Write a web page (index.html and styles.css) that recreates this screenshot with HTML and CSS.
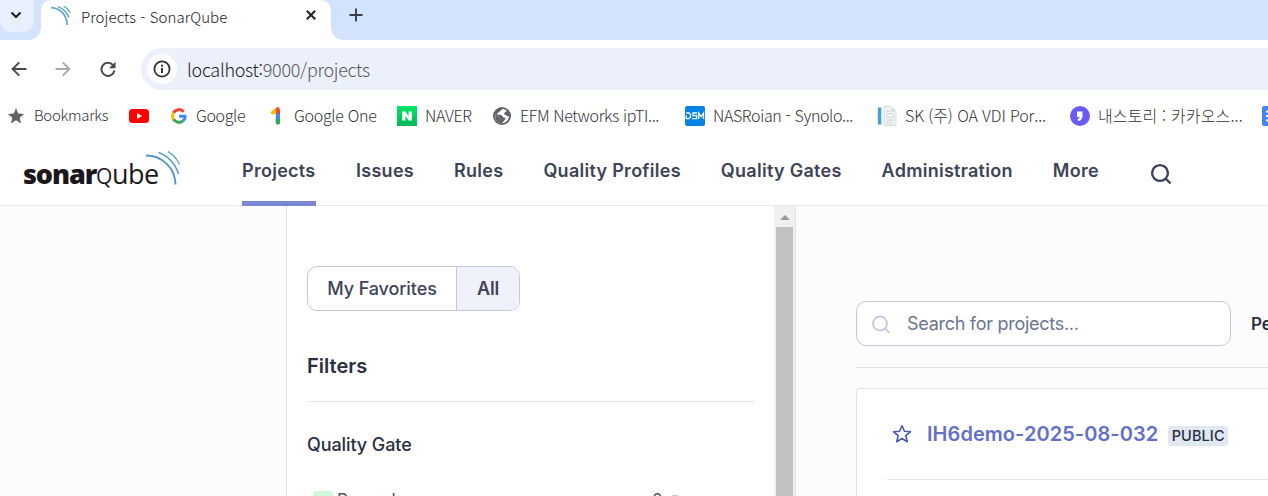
FILE: index.html
```html
<!DOCTYPE html>
<html lang="ko">
<head>
<meta charset="utf-8">
<title>Projects - SonarQube</title>
<link rel="stylesheet" href="styles.css">
</head>
<body>
<div class="window">
  <div class="tabstrip">
    <div class="tab-search"><svg width="12" height="8" viewBox="0 0 12 8"><path d="M1.500 1.500 6 6l4.500-4.500" fill="none" stroke="#202124" stroke-width="2.200"/></svg></div>
    <div class="tab">
      <svg class="favicon" width="20" height="20" viewBox="0 0 20 20" fill="none" stroke="#5fa3d0"><path d="M0 1.600C9 1.800 16 9 16.200 19" stroke-width="1.700"/><path d="M7 .6c5 2 9 6 11 11" stroke-width="1.400"/><path d="M12.500 0c3 1.500 5.500 4 7 7" stroke-width="1.200"/></svg>
      <span class="tab-title">Projects - SonarQube</span>
      <svg class="tab-close" width="10" height="10" viewBox="0 0 10 10"><path d="m.8.8 8.400 8.400m0-8.400L.8 9.200" stroke="#202124" stroke-width="2"/></svg>
    </div>
    <svg class="new-tab" width="14" height="14" viewBox="0 0 14 14"><path d="M7 .5v13M.5 7h13" stroke="#3b3e42" stroke-width="1.900"/></svg>
  </div>
  <div class="toolbar">
    <svg class="tool" width="16" height="16" viewBox="0 0 16 16" fill="none" stroke="#47494d" stroke-width="1.900"><path d="M15.500 8H2M8.300 1.300 1.600 8l6.700 6.700"/></svg>
    <svg class="tool" width="16" height="16" viewBox="0 0 16 16" fill="none" stroke="#a8a9ab" stroke-width="1.900"><path d="M.5 8H14M7.700 1.300 14.400 8l-6.700 6.700"/></svg>
    <svg class="tool" width="16" height="16" viewBox="0 0 16 16"><path d="M13 4.200A6.500 6.500 0 1 0 14.400 9.500" fill="none" stroke="#47494d" stroke-width="2"/><path d="M15.500.7v6.500H9z" fill="#47494d"/></svg>
    <div class="omnibox">
      <div class="site-info"><svg width="18" height="18" viewBox="0 0 18 18"><circle cx="9" cy="9" r="7.600" fill="none" stroke="#303236" stroke-width="1.800"/><path d="M9 8v5M9 4.800v2" stroke="#303236" stroke-width="1.900"/></svg></div>
      <span class="url"><span class="host">localhost:</span>9000/projects</span>
    </div>
  </div>
  <div class="bookmarks">
    <div class="bm bm-star"><svg width="20" height="20" viewBox="0 0 20 20"><path d="m10 2 2.200 5.500 6 .4-4.600 3.800 1.500 5.800L10 14.300l-5.100 3.200 1.500-5.800L1.800 7.900l6-.4z" fill="#5f6368"/></svg><span>Bookmarks</span></div>
    <div class="bm bm-yt"><svg width="20" height="20" viewBox="0 0 20 20"><rect y="3" width="20" height="14" rx="3.500" fill="#f00"/><path d="m8 7 5 3-5 3z" fill="#fff"/></svg></div>
    <div class="bm bm-google"><svg width="20" height="20" viewBox="0 0 20 20" fill="none" stroke-width="3"><path d="M15.700 5.700A6.400 6.400 0 0 0 5.500 6.700" stroke="#ea4335"/><path d="M5.500 6.700a6.400 6.400 0 0 0 0 6.700" stroke="#fbbc05"/><path d="M5.500 13.300a6.400 6.400 0 0 0 9.500 1.500" stroke="#34a853"/><path d="M15 14.800c1.500-1.300 2.200-3 2-4.600h-6" stroke="#4285f4"/></svg><span>Google</span></div>
    <div class="bm bm-one"><svg width="20" height="20" viewBox="0 0 20 20"><path d="M9.800 5H14v11.500a2.100 2.100 0 0 1-4.200 0z" fill="#4285f4"/><path d="M9.800 13H14v3.500a2.100 2.100 0 0 1-4.200 0z" fill="#34a853"/><path d="M10.500 1.500 14 4 8.500 8.300C6 9.500 3.500 6.800 5.500 5.300z" fill="#fbbc05"/><path d="M9.800 3.500c0-3.500 4.200-3.300 4.200 0v4.200H9.800z" fill="#ea4335" opacity=".85"/></svg><span>Google One</span></div>
    <div class="bm bm-naver"><svg width="20" height="20" viewBox="0 0 20 20"><defs><linearGradient id="nv" x2="0" y2="1"><stop stop-color="#02e66b"/><stop offset="1" stop-color="#05b65a"/></linearGradient></defs><path d="M0 0h20v20H0z" fill="url(#nv)"/><path d="M5.200 5.500h3.200l3.200 4.600V5.500h3.200v9h-3.200L8.400 9.900v4.600H5.200z" fill="#fff"/></svg><span>NAVER</span></div>
    <div class="bm bm-efm"><svg width="20" height="20" viewBox="0 0 20 20"><circle cx="10" cy="10" r="9" fill="#5f6368"/><path d="M11 2.800c-1 1.500-3 1.300-3.300 2.800-.2 1.500-2.200.6-2.500 2.100-.2 1.300 2.600 1 4.200 1.500 1.200.5 1 2.300 2.600 2.300 1.800 0 2 1.700.7 2.600-1.300 1-1.300 2.700-3 3.100-1.300-.3-1-2.300-1.300-3.700-1.600-.7-.8-3-2.800-3.500L3 8.800A7.200 7.200 0 0 0 9.700 17.200C14 17.300 17.200 13.500 17 10c-1 .8-2.300.5-2.600-.7-.3-1-2.500-.3-2.300-1.900.1-1.200 2.300-.9 2.400-3.100" fill="#fff"/><path d="M3.500 8.500 7 11.200c1.300.7.500 2.500 2 3.300v2.600C5 16.500 2.500 13 3.500 8.500" fill="#5f6368"/></svg><span>EFM Networks ipTI...</span></div>
    <div class="bm bm-nas"><svg width="20" height="20" viewBox="0 0 20 20"><rect width="20" height="20" rx="2" fill="#0583e6"/><path d="M1.300 7H4l1.500 1.300v3L4 12.600H1.300V9.500M12.200 7H8v2.700h3.600v2.900H7.200M13.700 13V7l2.400 3.500L18.500 7v6" fill="none" stroke="#fff" stroke-width="1.300"/></svg><span>NASRoian - Synolo...</span></div>
    <div class="bm bm-sk"><svg width="20" height="20" viewBox="0 0 20 20"><path d="M7 .5h7l5 5v14H7z" fill="#f1f3f5" stroke="#cdd3d7" stroke-width=".8"/><path d="M14 .5v5h5" fill="#d6dde2"/><path d="M.8 1.500h3.700v17H.8z" fill="#4b9fca"/><path d="M4.500 2h2v16h-2z" fill="#e8f4f9"/><path d="M9 5h4M9 14h8M9 17h7" stroke="#ccd2d7"/><path d="M9.500 8h7v3h-7z" fill="#fff" stroke="#ccd2d7"/></svg><span>SK (주) OA VDI Por...</span></div>
    <div class="bm bm-story"><svg width="20" height="20" viewBox="0 0 20 20"><circle cx="10" cy="10" r="10" fill="#6a5bf7"/><path d="M7 5.500h5.500V10c0 2.500-1.500 4.500-4.300 5.100L7.500 13c1.200-.3 2-.9 2.200-2H7z" fill="#fff"/></svg><span>내스토리 : 카카오스...</span></div>
    <div class="bm"><svg width="20" height="20" viewBox="0 0 20 20"><rect width="20" height="20" rx="2" fill="#4285f4"/><path d="M4 5.500h12M4 10h12M4 14.500h8" stroke="#fff" stroke-width="2"/></svg></div>
  </div>
  <div class="nav">
    <div class="logo">
      <span class="logo-sonar">sonar</span><span class="logo-q">Q</span><span class="logo-ube">ube</span>
      <svg class="logo-waves" width="37" height="36" viewBox="0 0 37 36" fill="none" stroke="#549bc8"><path d="M1 5.500c16 0 29 12 29.500 29" stroke-width="2"/><path d="M13.500 2.500c9 3 17 11 20 21.500" stroke-width="1.600"/><path d="M23 1.500c5 3 9 7.500 11.500 13" stroke-width="1.300"/></svg>
    </div>
    <div class="menu">
      <span class="item active">Projects</span><span class="item">Issues</span><span class="item">Rules</span><span class="item">Quality Profiles</span><span class="item">Quality Gates</span><span class="item">Administration</span><span class="item">More</span>
    </div>
    <svg class="nav-search" width="22" height="22" viewBox="0 0 22 22" fill="none" stroke="#3e4357" stroke-width="2.400"><circle cx="10" cy="10" r="7.900"/><path d="m15.500 15.500 5 4.800"/></svg>
  </div>
  <div class="content">
    <div class="side">
      <div class="filters">
        <div class="toggle"><span class="fav">My Favorites</span><span class="all">All</span></div>
        <div class="filters-title">Filters</div>
        <div class="gate-title">Quality Gate</div>
        <div class="gate-row"><span class="gate-chip"></span><span class="gate-name">Passed</span><span class="gate-count">0</span><span class="gate-bar"></span></div>
      </div>
      <div class="scrollbar"><div class="arrow"></div><div class="thumb"></div></div>
    </div>
    <div class="main">
      <div class="search-row">
        <div class="search"><svg width="18" height="18" viewBox="0 0 18 18" fill="none" stroke="#c5cbe0" stroke-width="1.900"><circle cx="8" cy="8.500" r="7"/><path d="m13 13.500 4.300 4.300"/></svg><span class="placeholder">Search for projects...</span></div>
        <span class="perspective">Perspective</span>
      </div>
      <div class="card">
        <div class="card-head">
          <svg width="20" height="20" viewBox="0 0 20 20"><path d="m10 1.800 2.400 5.500 6 .5-4.600 3.900 1.500 6-5.300-3.200-5.300 3.200 1.500-6-4.600-3.900 6-.5z" fill="none" stroke="#4b56ad" stroke-width="1.600" stroke-linejoin="round"/></svg>
          <span class="project">IH6demo-2025-08-032</span><span class="badge">PUBLIC</span>
        </div>
      </div>
    </div>
  </div>
</div>
</body>
</html>
```
FILE: styles.css
```css
* { box-sizing: border-box; }
body { margin: 0; background: #fff; font-family: Inter, sans-serif; }
svg { display: block; flex: none; }
.window { width: 1268px; height: 496px; overflow: hidden; display: flex; flex-direction: column; white-space: nowrap; }
.tabstrip { height: 40px; flex: none; background: #d3e2fd; display: flex; }
.tab-search { width: 34px; height: 32px; background: #e9f0fd; border-radius: 0 0 11px 11px; padding: 11px 0 0 10px; }
.tab { width: 290px; height: 40px; margin-left: 7px; background: #fff; border-radius: 10px 10px 0 0; display: flex; position: relative; padding-left: 10px; }
.tab::before, .tab::after { content: ""; position: absolute; bottom: 0; width: 12px; height: 12px; }
.tab::before { left: -12px; background: radial-gradient(circle at 0 0, transparent 11.500px, #fff 12px); }
.tab::after { right: -12px; background: radial-gradient(circle at 100% 0, transparent 11.500px, #fff 12px); }
.favicon { margin-top: 6px; }
.tab-title { width: 225px; margin-left: 10px; font: 300 15px/34px "Noto Sans CJK KR", sans-serif; letter-spacing: .08px; color: #202124; }
.tab-close { margin-top: 10px; }
.new-tab { margin: 8px 0 0 18px; }
.toolbar { height: 56px; flex: none; display: flex; padding: 8px 0 0 11px; }
.tool { margin: 13px 29px 0 0; }
.tool:nth-child(2) { margin: 13px 29px 0 -1px; }
.tool:nth-child(3) { margin-right: 25px; }
.omnibox { flex: 1; height: 42px; background: #ebf0fa; border-radius: 21px 0 0 21px; display: flex; align-items: center; padding-left: 6px; }
.site-info { width: 30px; height: 30px; border-radius: 50%; background: #fff; padding: 6px; }
.url { margin-left: 10px; font: 300 18px/42px "Noto Sans CJK KR", sans-serif; letter-spacing: -.3px; color: #55585c; }
.host { color: #202124; }
.bookmarks { height: 40px; flex: none; display: flex; align-items: center; padding-left: 6px; font: 300 16px/24px "Noto Sans CJK KR", sans-serif; color: #303338; }
.bm { flex: none; width: 193px; display: flex; align-items: center; gap: 8px; }
.bm span { margin-top: -2px; }
.bm-star { width: 123px; font-size: 15px; letter-spacing: -.3px; }
.bm-yt { width: 39px; }
.bm-google { width: 98px; letter-spacing: -.35px; }
.bm-one { width: 131px; letter-spacing: -.3px; }
.bm-naver { width: 95px; letter-spacing: -.3px; }
.bm-efm { letter-spacing: -.36px; }
.bm-nas { letter-spacing: -.38px; }
.bm-sk { letter-spacing: -.12px; }
.bm-story { letter-spacing: .15px; }
.bm-nas, .bm-story { width: 192px; }
.nav { height: 70px; flex: none; border-bottom: 1px solid #e7e8ee; display: flex; }
.logo { width: 157px; margin-left: 23px; height: 69px; display: flex; align-items: baseline; position: relative; font-family: "Open Sans", sans-serif; font-size: 27px; line-height: 75px; color: #1b171b; }
.logo-sonar { width: 73px; font-weight: 800; letter-spacing: -1.100px; }
.logo-q { width: 16px; font-size: 21px; letter-spacing: 0; }
.logo-ube { font-weight: 400; letter-spacing: -.5px; }
.logo-waves { position: absolute; left: 122px; top: 14px; }
.menu { display: flex; gap: 40px; margin-left: 62px; }
.item { height: 70px; font-size: 18px; font-weight: 600; line-height: 70px; color: #3e4357; letter-spacing: .28px; }
.active { width: 74px; border-bottom: 5px solid #7b87d4; }
.nav-search { margin: 27px 0 0 51px; }
.content { flex: 1; display: flex; background: #fcfcfe; min-height: 0; }
.side { width: 510px; margin-left: 286px; border: solid #e1e2ee; border-width: 0 1px; background: #fff; display: flex; justify-content: space-between; }
.filters { width: 447px; margin-left: 20px; padding-top: 60px; }
.toggle { width: 213px; height: 45px; border: 1px solid #c5c8dc; border-radius: 10px; display: flex; overflow: hidden; font-size: 18px; font-weight: 500; line-height: 44px; color: #3e4357; text-align: center; }
.fav { width: 148px; letter-spacing: -.1px; }
.all { flex: 1; border-left: 1px solid #c5c8dc; background: #eff2fa; font-weight: 600; letter-spacing: -.2px; }
.filters-title { height: 91px; border-bottom: 1px solid #e5e7ec; font-size: 20px; font-weight: 600; line-height: 24px; padding-top: 43px; color: #2a2f40; }
.gate-title { font-size: 18px; font-weight: 500; line-height: 24px; letter-spacing: -.1px; padding-top: 31px; color: #2a2f40; }
.gate-row { display: flex; align-items: flex-start; padding: 34px 0 0 6px; color: #4d5268; font-size: 17px; line-height: 18px; }
.gate-chip { width: 20px; height: 20px; border-radius: 3px; background: #d0f8da; }
.gate-name { width: 315px; margin-left: 4px; }
.gate-count { width: 20px; }
.gate-bar { width: 6px; height: 8px; margin-top: 4px; background: #c8cad5; }
.scrollbar { width: 21px; background: #f0f0f0; display: flex; flex-direction: column; align-items: center; }
.arrow { border: solid transparent; border-width: 0 5px 5px; border-bottom-color: #999; margin: 9px 0 7px; }
.thumb { width: 17px; flex: 1; background: #c1c1c1; }
.main { flex: 1; min-width: 0; margin-left: 60px; padding-top: 95px; display: flex; flex-direction: column; }
.search-row { height: 67px; border-bottom: 1px solid #e1e3ec; display: flex; gap: 20px; }
.search { width: 375px; height: 45px; border: 1px solid #c5c8dc; border-radius: 10px; background: #fff; display: flex; align-items: center; padding-left: 15px; gap: 17px; flex: none; }
.placeholder { font-size: 18px; letter-spacing: -.28px; color: #6a7590; }
.perspective { font-size: 17px; font-weight: 600; line-height: 47px; color: #2a2f40; }
.card { width: 500px; flex: 1; margin-top: 20px; border: 1px solid #e1e3ec; border-bottom: 0; border-radius: 5px 0 0; background: #fff; padding-left: 30px; }
.card-head { height: 91px; border-bottom: 1px solid #e1e6f3; display: flex; align-items: center; padding-left: 5px; }
.project { margin-left: 15px; font-size: 20px; font-weight: 600; letter-spacing: .05px; color: #6370c7; }
.badge { margin: 4px 0 0 10px; width: 60px; height: 20px; border-radius: 3px; background: #e1e6f3; font-size: 14.500px; font-weight: 500; letter-spacing: .1px; line-height: 20px; text-align: center; color: #2a2f40; }
```
